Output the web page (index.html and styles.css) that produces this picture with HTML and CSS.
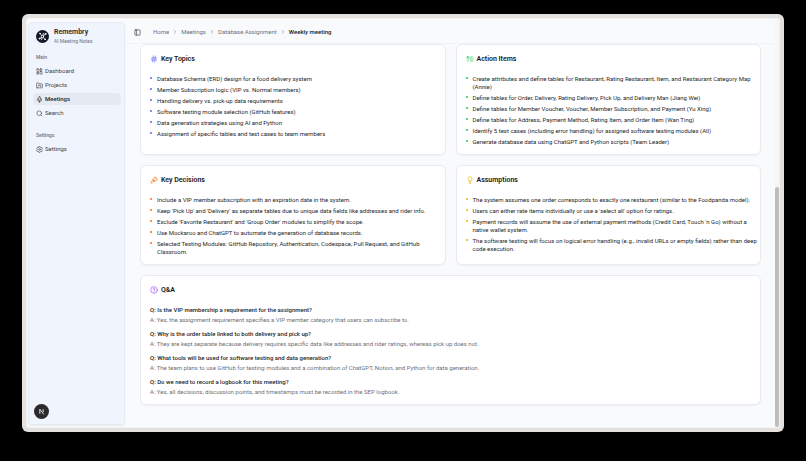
FILE: index.html
```html
<!DOCTYPE html>
<html lang="en">
<head>
<meta charset="utf-8">
<meta name="viewport" content="width=device-width, initial-scale=1">
<title>Weekly meeting - Remembry</title>
<link rel="stylesheet" href="styles.css">
</head>
<body>
<div class="window">
  <div class="app">
    <aside class="sidebar">
      <a class="brand" href="#">
        <svg class="brand-logo" viewBox="0 0 28 28" aria-hidden="true">
          <circle cx="14" cy="14" r="14" fill="#111827"/>
          <g fill="none" stroke="#fff" stroke-width="1.7" stroke-linecap="round">
            <path d="M12 12 9 8M16 12l4-3M16 16l3 4M12 16l-4 2M15 11l1-4M13 17l-1 4"/>
            <circle cx="8.500" cy="7.500" r="1"/><circle cx="20.500" cy="8.500" r="1.200"/><circle cx="19.500" cy="20" r="1"/><circle cx="7.500" cy="18.500" r="1.200"/><circle cx="14" cy="14" r="2.500"/>
          </g>
        </svg>
        <span class="brand-text"><strong class="brand-name">Remembry</strong><span class="brand-sub">AI Meeting Notes</span></span>
      </a>
      <nav class="nav" aria-label="Main">
        <h2 class="nav-label">Main</h2>
        <a class="nav-link" href="#"><svg class="icon" viewBox="0 0 24 24"><rect x="3" y="3" width="7" height="9" rx="1"/><rect x="14" y="3" width="7" height="5" rx="1"/><rect x="14" y="12" width="7" height="9" rx="1"/><rect x="3" y="16" width="7" height="5" rx="1"/></svg>Dashboard</a>
        <a class="nav-link" href="#"><svg class="icon" viewBox="0 0 24 24"><path d="M4 20h16a2 2 0 0 0 2-2V8a2 2 0 0 0-2-2h-8l-2-3H4a2 2 0 0 0-2 2v13a2 2 0 0 0 2 2z"/><path d="M8 10v4M12 10v2M16 10v6"/></svg>Projects</a>
        <a class="nav-link active" href="#" aria-current="page"><svg class="icon" viewBox="0 0 24 24"><rect x="9" y="2" width="6" height="13" rx="3"/><path d="M19 10v2a7 7 0 0 1-14 0v-2M12 19v3"/></svg>Meetings</a>
        <a class="nav-link" href="#"><svg class="icon" viewBox="0 0 24 24"><circle cx="11" cy="11" r="8"/><path d="m21 21-4-4"/></svg>Search</a>
      </nav>
      <nav class="nav" aria-label="Settings">
        <h2 class="nav-label">Settings</h2>
        <a class="nav-link" href="#"><svg class="icon" viewBox="0 0 24 24"><path d="M10 2h4l1 3 2 1 3-1 2 4-2 2v2l2 2-2 4-3-1-2 1-1 3h-4l-1-3-2-1-3 1-2-4 2-2v-2L2 9l2-4 3 1 2-1z"/><circle cx="12" cy="12" r="3"/></svg>Settings</a>
      </nav>
      <button class="dev-button" type="button" aria-label="Open developer tools"><svg viewBox="0 0 16 16"><path d="M5 12V4l7 9M11 4v5" fill="none" stroke="#fff" stroke-width="1.500"/></svg></button>
    </aside>
    <main class="main">
      <header class="topbar">
        <button class="toggle" type="button" aria-label="Toggle sidebar"><svg class="icon" viewBox="0 0 24 24"><rect x="3" y="3" width="18" height="18" rx="2"/><path d="M9 3v18"/></svg></button>
        <nav class="crumbs" aria-label="Breadcrumb">
          <a href="#">Home</a><svg class="chevron" viewBox="0 0 24 24"><path d="m9 18 6-6-6-6"/></svg>
          <a href="#">Meetings</a><svg class="chevron" viewBox="0 0 24 24"><path d="m9 18 6-6-6-6"/></svg>
          <a href="#">Database Assignment</a><svg class="chevron" viewBox="0 0 24 24"><path d="m9 18 6-6-6-6"/></svg>
          <span class="current" aria-current="page">Weekly meeting</span>
        </nav>
      </header>
      <div class="content">
        <section class="card topics">
          <h2 class="card-title"><svg class="icon" viewBox="0 0 24 24"><path d="M4 9h16M4 15h16M10 3 8 21M16 3l-2 18"/></svg>Key Topics</h2>
          <ul class="list">
            <li>Database Schema (ERD) design for a food delivery system</li>
            <li>Member Subscription logic (VIP vs. Normal members)</li>
            <li>Handling delivery vs. pick-up data requirements</li>
            <li>Software testing module selection (GitHub features)</li>
            <li>Data generation strategies using AI and Python</li>
            <li>Assignment of specific tables and test cases to team members</li>
          </ul>
        </section>
        <section class="card actions">
          <h2 class="card-title"><svg class="icon" viewBox="0 0 24 24"><rect x="3" y="5" width="6" height="6" rx="1"/><path d="m3 17 2 2 4-4M13 6h8M13 12h8M13 18h8"/></svg>Action Items</h2>
          <ul class="list">
            <li>Create attributes and define tables for Restaurant, Rating Restaurant, Item, and Restaurant Category Map (Annie)</li>
            <li>Define tables for Order, Delivery, Rating Delivery, Pick Up, and Delivery Man (Jiang Wei)</li>
            <li>Define tables for Member Voucher, Voucher, Member Subscription, and Payment (Yu Xing)</li>
            <li>Define tables for Address, Payment Method, Rating Item, and Order Item (Wan Ting)</li>
            <li>Identify 5 test cases (including error handling) for assigned software testing modules (All)</li>
            <li>Generate database data using ChatGPT and Python scripts (Team Leader)</li>
          </ul>
        </section>
        <section class="card decisions">
          <h2 class="card-title"><svg class="icon" viewBox="0 0 24 24"><path d="m14 13-8 8a2 2 0 0 1-3-3l8-8M10 9l6-6 6 6-6 6zM8 11l6 6M13 3l9 9"/></svg>Key Decisions</h2>
          <ul class="list">
            <li>Include a VIP member subscription with an expiration date in the system.</li>
            <li>Keep 'Pick Up' and 'Delivery' as separate tables due to unique data fields like addresses and rider info.</li>
            <li>Exclude 'Favorite Restaurant' and 'Group Order' modules to simplify the scope.</li>
            <li>Use Mockaroo and ChatGPT to automate the generation of database records.</li>
            <li>Selected Testing Modules: GitHub Repository, Authentication, Codespace, Pull Request, and GitHub Classroom.</li>
          </ul>
        </section>
        <section class="card assumptions">
          <h2 class="card-title"><svg class="icon" viewBox="0 0 24 24"><path d="M15 14c0-2 3-3 3-6A6 6 0 0 0 6 8c0 3 3 4 3 6zM9 18h6M10 22h4"/></svg>Assumptions</h2>
          <ul class="list">
            <li>The system assumes one order corresponds to exactly one restaurant (similar to the Foodpanda model).</li>
            <li>Users can either rate items individually or use a 'select all' option for ratings.</li>
            <li>Payment records will assume the use of external payment methods (Credit Card, Touch 'n Go) without a native wallet system.</li>
            <li>The software testing will focus on logical error handling (e.g., invalid URLs or empty fields) rather than deep code execution.</li>
          </ul>
        </section>
        <section class="card questions">
          <h2 class="card-title"><svg class="icon" viewBox="0 0 24 24"><circle cx="12" cy="12" r="10"/><path d="M9 9a3 3 0 0 1 6 1c0 2-3 2-3 4M12 17v1"/></svg>Q&amp;A</h2>
          <dl class="qa">
            <div><dt>Q: Is the VIP membership a requirement for the assignment?</dt><dd>A: Yes, the assignment requirement specifies a VIP member category that users can subscribe to.</dd></div>
            <div><dt>Q: Why is the order table linked to both delivery and pick up?</dt><dd>A: They are kept separate because delivery requires specific data like addresses and rider ratings, whereas pick up does not.</dd></div>
            <div><dt>Q: What tools will be used for software testing and data generation?</dt><dd>A: The team plans to use GitHub for testing modules and a combination of ChatGPT, Notion, and Python for data generation.</dd></div>
            <div><dt>Q: Do we need to record a logbook for this meeting?</dt><dd>A: Yes, all decisions, discussion points, and timestamps must be recorded in the SEP logbook.</dd></div>
          </dl>
        </section>
      </div>
    </main>
    <div class="scrollbar" aria-hidden="true"><div class="scroll-thumb"></div></div>
  </div>
</div>
</body>
</html>
```
FILE: styles.css
```css
* { box-sizing: border-box; }

body {
  margin: 0;
  min-height: 100vh;
  padding: 14px 22px 29px;
  display: flex;
  background: #000;
  color: #27272a;
  font: 6px/8px Roboto, "Liberation Sans", sans-serif;
}

h2, ul, dl, dd { margin: 0; padding: 0; }
a { color: inherit; text-decoration: none; }
button { padding: 0; border: 0; background: none; color: inherit; }

.window {
  flex: 1;
  display: flex;
  padding: 4px;
  border-radius: 6px;
  background: #e5e1df;
}

.app {
  flex: 1;
  min-width: 0;
  display: flex;
  border: 1px solid #f4f3f3;
  border-radius: 3px;
  background: #f9fafc;
}

.icon, .chevron {
  flex: none;
  width: 7px;
  height: 7px;
  fill: none;
  stroke: currentColor;
  stroke-width: 2;
  stroke-linecap: round;
  stroke-linejoin: round;
}

.sidebar {
  position: relative;
  flex: none;
  width: 97px;
  margin: 3px 0 2px 1px;
  padding: 4px 3px 4px 4px;
  border: 1px solid #e6eaf2;
  border-radius: 4px;
  background: #f0f4fd;
  box-shadow: 0 1px 2px #00000010;
}

.brand { display: flex; align-items: center; gap: 5px; padding: 0 3px; margin-bottom: 6px; }
.brand-logo { width: 13px; height: 13px; }
.brand-text { display: flex; flex-direction: column; }
.brand-name { font-size: 7px; line-height: 10px; font-weight: 600; }
.brand-sub { font-size: 5px; line-height: 8px; color: #71717a; }

.nav { margin-bottom: 10px; }
.nav-label { padding: 0 3px; margin-bottom: 2px; font-size: 5px; line-height: 12px; font-weight: 500; color: #71717a; }
.nav-link { display: flex; align-items: center; gap: 2px; height: 12px; margin-bottom: 2px; padding: 0 3px; border-radius: 4px; color: #3f3f46; }
.nav-link.active { background: #e5e9f2; font-weight: 500; color: #27272a; }

.dev-button {
  position: absolute;
  left: 5px;
  bottom: 5px;
  width: 15px;
  height: 15px;
  border-radius: 50%;
  background: #2b2b2b;
}
.dev-button svg { display: block; width: 9px; height: 9px; margin: auto; }

.main { flex: 1; min-width: 0; }

.topbar { display: flex; align-items: center; height: 25px; padding-top: 2px; border-bottom: 1px solid #f1f3f6; }
.toggle { display: flex; margin-left: 9px; }
.crumbs { display: flex; align-items: center; gap: 3px; margin-left: 6px; padding-left: 6px; color: #71717a; }
.chevron { width: 6px; height: 6px; }
.current { color: #18181b; font-weight: 500; }

.content {
  display: grid;
  grid-template-columns: 1fr 1fr;
  gap: 10px;
  padding: 0 14px 20px 15px;
}

.card {
  padding: 9px 3px 8px 9px;
  border: 1px solid #e8ebf0;
  border-radius: 6px;
  background: #fff;
  box-shadow: 0 1px 1px #0000000a;
}
.card-title { display: flex; align-items: center; gap: 3px; margin-bottom: 11px; font-size: 7px; line-height: 10px; font-weight: 600; color: #18181b; }
.topics { --accent: #6366f1; }
.actions { --accent: #22c55e; }
.decisions { --accent: #f97316; }
.assumptions { --accent: #eab308; }
.questions { --accent: #a855f7; grid-column: 1 / -1; }
.card-title .icon { width: 8px; height: 8px; color: var(--accent); }

.list { display: grid; gap: 3px; list-style: none; }
.list li { display: flex; gap: 5px; }
.list li::before { content: ""; flex: none; width: 2px; height: 2px; margin-top: 2px; border-radius: 1px; background: var(--accent); }

.qa { display: grid; gap: 6px; }
.qa div { display: grid; gap: 2px; }
.qa dt { font-weight: 500; }
.qa dd { color: #71717a; }

.scrollbar { flex: none; width: 4px; padding-top: 168px; display: flex; background: #f7f7f7; }
.scroll-thumb { flex: 1; border-radius: 2px; background: #bdbdbd; }
```
